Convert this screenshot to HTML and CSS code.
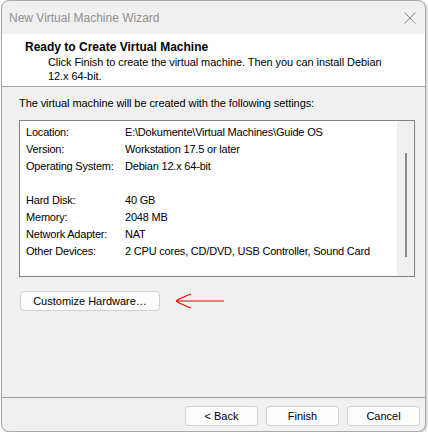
FILE: index.html
```html
<!DOCTYPE html>
<html>
<head>
<meta charset="utf-8">
<link rel="stylesheet" href="styles.css">
</head>
<body>
<div class="window">
  <div class="titlebar">
    <span class="title">New Virtual Machine Wizard</span>
    <svg class="close" width="12" height="12" viewBox="0 0 12 12"><path d="M0.5 0.5 L11.5 11.5 M11.5 0.5 L0.5 11.5" stroke="#8a8a8a" stroke-width="1" fill="none"/></svg>
  </div>
  <div class="header">
    <div class="h-title">Ready to Create Virtual Machine</div>
    <div class="h-sub">Click Finish to create the virtual machine. Then you can install Debian<br>12.x 64-bit.</div>
  </div>
  <div class="content">
    <div class="intro">The virtual machine will be created with the following settings:</div>
    <div class="settings">
      <div class="rows">
        <div class="row"><span class="lbl">Location:</span><span>E:\Dokumente\Virtual Machines\Guide OS</span></div>
        <div class="row"><span class="lbl">Version:</span><span>Workstation 17.5 or later</span></div>
        <div class="row"><span class="lbl">Operating System:</span><span>Debian 12.x 64-bit</span></div>
        <div class="row"><span class="lbl">&nbsp;</span><span></span></div>
        <div class="row"><span class="lbl">Hard Disk:</span><span>40 GB</span></div>
        <div class="row"><span class="lbl">Memory:</span><span>2048 MB</span></div>
        <div class="row"><span class="lbl">Network Adapter:</span><span>NAT</span></div>
        <div class="row"><span class="lbl">Other Devices:</span><span>2 CPU cores, CD/DVD, USB Controller, Sound Card</span></div>
      </div>
      <div class="scrollbar"><div class="thumb"></div></div>
    </div>
    <div class="custom-row">
      <button class="btn custom">Customize Hardware…</button>
      <svg class="arrow" width="50" height="16" viewBox="0 0 50 16"><path d="M49 8 H1 M1 8 L5 5.5 L9 4 L12 2.5 L16 1 M1 8 L5 10.5 L9 12 L12 13.5 L16 15" stroke="#ff0000" stroke-width="1.2" fill="none"/></svg>
    </div>
  </div>
  <div class="footer">
    <button class="btn">&lt; Back</button>
    <button class="btn">Finish</button>
    <button class="btn">Cancel</button>
  </div>
</div>
</body>
</html>
```
FILE: styles.css
```css
html, body { margin: 0; padding: 0; background: #ffffff; }
body { font-family: "Liberation Sans", Arial, sans-serif; font-size: 12px; color: #000; }
.window {
  margin-left: 1px;
  width: 423px;
  height: 430px;
  border: 1px solid #a8a8a8;
  border-radius: 8px;
  background: #f0f0f0;
  box-shadow: 1px 1px 3px rgba(0,0,0,0.25);
  display: flex;
  flex-direction: column;
  overflow: hidden;
  white-space: nowrap;
}
.titlebar {
  height: 33px;
  display: flex;
  align-items: center;
  justify-content: space-between;
  padding: 0 9px 0 7px;
  flex: none;
}
.title { color: #8f8f8f; font-size: 12px; }
.header {
  background: #fff;
  border-bottom: 1px solid #a0a0a0;
  padding: 5px 0 0 23px;
  box-sizing: border-box;
  height: 53px;
  flex: none;
}
.h-title { font-weight: bold; line-height: 16px; }
.h-sub { padding-left: 23px; line-height: 14px; font-size: 11px; letter-spacing: -0.08px; }
.content { flex: 1; padding: 8px 10px 0 17px; }
.intro { line-height: 16px; font-size: 11px; letter-spacing: -0.08px; }
.settings {
  margin-top: 9px;
  height: 157px;
  border: 1px solid #828282;
  background: #fff;
  display: flex;
  box-sizing: border-box;
}
.rows { flex: 1; padding: 3px 0 0 6px; font-size: 11px; letter-spacing: -0.2px; }
.row { display: flex; height: 17px; line-height: 17px; }
.lbl { width: 99px; flex: none; }
.scrollbar { width: 17px; background: #f0f0f0; display: flex; justify-content: center; padding-top: 32px; box-sizing: border-box; }
.thumb { width: 2px; height: 104px; background: #8a8a8a; }
.custom-row { display: flex; align-items: center; margin-top: 14px; }
.btn {
  font-family: inherit;
  font-size: 11px;
  background: #fdfdfd;
  border: 1px solid #d0d0d0;
  border-radius: 4px;
  height: 20px;
  padding: 0;
  color: #000;
  width: 73px;
}
.custom { width: 140px; margin-left: 1px; }
.arrow { margin-left: 15px; }
.footer {
  border-top: 1px solid #a0a0a0;
  height: 34px;
  flex: none;
  display: flex;
  justify-content: flex-end;
  align-items: flex-start;
  gap: 8px;
  padding: 8px 5px 0 0;
  box-sizing: border-box;
}
```
